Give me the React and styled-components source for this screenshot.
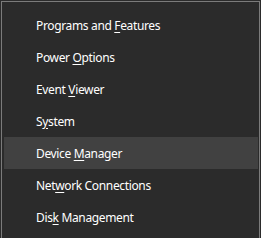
import React from "react";
import styled, { createGlobalStyle } from "styled-components";

const Global = createGlobalStyle`
  html, body { margin: 0; padding: 0; background: #2b2b2b; }
  body { width: 261px; height: 238px; overflow: hidden; }
`;

const Menu = styled.div`
  box-sizing: border-box;
  margin: 1px 1px 0 1px;
  width: 259px;
  height: 237px;
  background: #2b2b2b;
  border: 1px solid #7b7b7b;
  border-bottom: none;
  padding: 7px 1px 0 2px;
  display: flex;
  flex-direction: column;
  font-family: "Segoe UI", "Noto Sans", sans-serif;
  font-size: 12px;
  letter-spacing: -0.35px;
  color: #ffffff;
`;

const Item = styled.div`
  height: 32px;
  display: flex;
  align-items: center;
  padding-left: 32px;
  background: ${(p) => (p.$active ? "#414141" : "transparent")};
`;

const Label = styled.span`
  white-space: pre;
`;

const Key = styled.span`
  text-decoration: underline;
  text-underline-offset: 2px;
  text-decoration-thickness: 1px;
`;

const items = [
  ["Programs and ", "F", "eatures"],
  ["Power ", "O", "ptions"],
  ["Event ", "V", "iewer"],
  ["S", "y", "stem"],
  ["Device ", "M", "anager"],
  ["Net", "w", "ork Connections"],
  ["Dis", "k", " Management"],
];

export default function App() {
  return (
    <>
      <Global />
      <Menu>
        {items.map(([a, k, b], i) => (
          <Item key={i} $active={i === 4}>
            <Label>
              {a}
              <Key>{k}</Key>
              {b}
            </Label>
          </Item>
        ))}
      </Menu>
    </>
  );
}
